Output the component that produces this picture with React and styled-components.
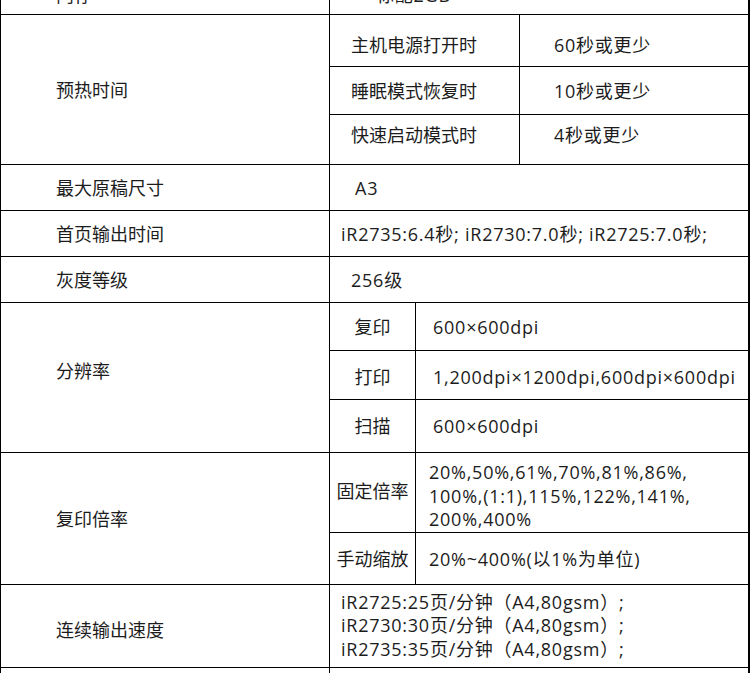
import React from "react";
import styled, { createGlobalStyle } from "styled-components";

const GlobalStyle = createGlobalStyle`
  html, body {
    margin: 0;
    padding: 0;
    background: #fff;
  }
  body {
    font-family: "Open Sans", "Noto Sans CJK SC", sans-serif;
    color: #1c1c1c;
  }
`;

export default function App() {
  return (
    <>
      <GlobalStyle />
      <Page>
        <SpecTable>
          <colgroup>
            <col style={{ width: 329 }} />
            <col style={{ width: 86 }} />
            <col style={{ width: 104 }} />
            <col style={{ width: 229 }} />
          </colgroup>
          <tbody>
            <Row $h={40}>
              <LabelCell>内存</LabelCell>
              <ValueCell colSpan={3} $indent={46}>标配2GB</ValueCell>
            </Row>

            <Row $h={52}>
              <LabelCell rowSpan={3}>预热时间</LabelCell>
              <SubLabel colSpan={2} $indent={21} $pt={8}>主机电源打开时</SubLabel>
              <ValueCell $indent={34} $pt={8}>60秒或更少</ValueCell>
            </Row>
            <Row $h={48}>
              <SubLabel colSpan={2} $indent={21}>睡眠模式恢复时</SubLabel>
              <ValueCell $indent={34}>10秒或更少</ValueCell>
            </Row>
            <Row $h={50}>
              <SubLabel colSpan={2} $indent={21} $pb={9}>快速启动模式时</SubLabel>
              <ValueCell $indent={34} $pb={9}>4秒或更少</ValueCell>
            </Row>

            <Row $h={46}>
              <LabelCell>最大原稿尺寸</LabelCell>
              <ValueCell colSpan={3} $indent={25}>A3</ValueCell>
            </Row>
            <Row $h={46}>
              <LabelCell>首页输出时间</LabelCell>
              <ValueCell colSpan={3} $indent={11}>
                iR2735:6.4秒; iR2730:7.0秒; iR2725:7.0秒;
              </ValueCell>
            </Row>
            <Row $h={46}>
              <LabelCell>灰度等级</LabelCell>
              <ValueCell colSpan={3} $indent={21}>256级</ValueCell>
            </Row>

            <Row $h={48}>
              <LabelCell rowSpan={3} $pb={14}>分辨率</LabelCell>
              <SubLabel $center>复印</SubLabel>
              <ValueCell colSpan={2} $indent={17}>600×600dpi</ValueCell>
            </Row>
            <Row $h={49}>
              <SubLabel $center $pt={3}>打印</SubLabel>
              <ValueCell colSpan={2} $indent={17} $pt={3}>
                1,200dpi×1200dpi,600dpi×600dpi
              </ValueCell>
            </Row>
            <Row $h={53}>
              <SubLabel $center>扫描</SubLabel>
              <ValueCell colSpan={2} $indent={17}>600×600dpi</ValueCell>
            </Row>

            <Row $h={80}>
              <LabelCell rowSpan={2}>复印倍率</LabelCell>
              <SubLabel $center $pb={4}>固定倍率</SubLabel>
              <ValueCell colSpan={2} $indent={13} $pt={8}>
                <Lines>
                  20%,50%,61%,70%,81%,86%,
                  <br />
                  100%,(1:1),115%,122%,141%,
                  <br />
                  200%,400%
                </Lines>
              </ValueCell>
            </Row>
            <Row $h={52}>
              <SubLabel $center>手动缩放</SubLabel>
              <ValueCell colSpan={2} $indent={13}>20%~400%(以1%为单位)</ValueCell>
            </Row>

            <Row $h={83}>
              <LabelCell $pt={8}>连续输出速度</LabelCell>
              <ValueCell colSpan={3} $indent={11}>
                <Lines>
                  iR2725:25页/分钟（A4,80gsm）;
                  <br />
                  iR2730:30页/分钟（A4,80gsm）;
                  <br />
                  iR2735:35页/分钟（A4,80gsm）;
                </Lines>
              </ValueCell>
            </Row>
            <Row $h={46}>
              <LabelCell>双面输出</LabelCell>
              <ValueCell colSpan={3} $indent={21}>标配</ValueCell>
            </Row>
          </tbody>
        </SpecTable>
      </Page>
    </>
  );
}

const Page = styled.div`
  width: 750px;
  height: 673px;
  overflow: hidden;
`;

const SpecTable = styled.table`
  margin-top: -26px;
  width: 749px;
  table-layout: fixed;
  border-collapse: collapse;
  border-right: 2px solid #000;
  font-size: 18px;
`;

const Row = styled.tr`
  height: ${({ $h }) => $h}px;
`;

const Cell = styled.td`
  border: 1px solid #000;
  padding: ${({ $pt }) => $pt || 0}px 0 ${({ $pb }) => $pb || 0}px 0;
  vertical-align: middle;
  line-height: 24px;
  white-space: nowrap;
`;

const LabelCell = styled(Cell)`
  padding-left: 55px;
`;

const SubLabel = styled(Cell)`
  padding-left: ${({ $indent }) => $indent || 0}px;
  text-align: ${({ $center }) => ($center ? "center" : "left")};
`;

const ValueCell = styled(Cell)`
  padding-left: ${({ $indent }) => $indent || 0}px;
  letter-spacing: 0.75px;
`;

const Lines = styled.div`
  line-height: 23.5px;
`;
